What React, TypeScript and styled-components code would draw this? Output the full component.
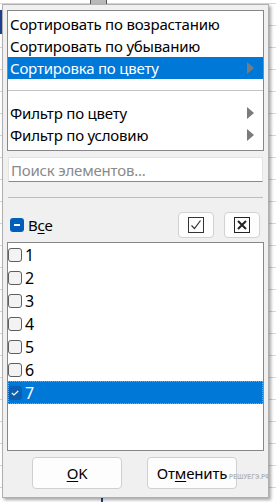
import React from "react";
import styled, { createGlobalStyle } from "styled-components";

const GlobalStyle = createGlobalStyle`
  html, body { margin: 0; padding: 0; background: #fff; overflow: hidden; }
  body { font-family: "Noto Sans", "Open Sans", sans-serif; }
  * { box-sizing: border-box; }
`;

const Sheet = styled.div`
  position: relative;
  width: 276px;
  height: 502px;
  overflow: hidden;
  background-color: #fff;
  background-image: repeating-linear-gradient(
    to bottom,
    transparent 0px,
    transparent 3px,
    #d6d6d6 3px,
    #d6d6d6 4px,
    transparent 4px,
    transparent 22px
  );
  background-size: 100% 22px;
`;

const FilterButton = styled.div`
  position: absolute;
  left: 90px;
  top: -3px;
  width: 17px;
  height: 8px;
  background: #b9b9b9;
  border: 1px solid #555;
`;

const CellCursorV = styled.div<{ $x: number; $y: number; $h: number }>`
  position: absolute;
  left: ${(p) => p.$x}px;
  top: ${(p) => p.$y}px;
  width: 2px;
  height: ${(p) => p.$h}px;
  background: #1f3f8f;
`;

const Popup = styled.div`
  position: absolute;
  left: 2px;
  top: 4px;
  width: 267px;
  height: 494px;
  background: #f0f0f0;
  border: 1px solid #b0b0b0;
  box-shadow: 2px 2px 3px rgba(0, 0, 0, 0.35);
  padding: 5px 4px 0 4px;
  display: flex;
  flex-direction: column;
  font-size: 15px;
  letter-spacing: -0.2px;
  color: #000;
`;

const Menu = styled.div`
  width: 257px;
  height: 141px;
  background: #fff;
  border: 1px solid #86868b;
  padding: 2px 0 0 0;
  display: flex;
  flex-direction: column;
`;

const MenuItem = styled.div<{ $active?: boolean }>`
  height: 22px;
  display: flex;
  align-items: center;
  justify-content: space-between;
  padding: 0 9px 0 2px;
  white-space: nowrap;
  background: ${(p) => (p.$active ? "#0078d7" : "transparent")};
  color: ${(p) => (p.$active ? "#fff" : "#000")};
`;

const MenuSeparator = styled.div`
  height: 23px;
  display: flex;
  align-items: center;
  &::after {
    content: "";
    display: block;
    width: 100%;
    height: 1px;
    background: #c4c4c4;
    margin-top: -1px;
  }
`;

const Arrow = () => (
  <svg width="7" height="12" viewBox="0 0 7 12">
    <path d="M0 0 L7 6 L0 12 Z" fill="#7b7b7b" />
  </svg>
);

const Search = styled.div`
  margin: 6px 0 0 1px;
  width: 255px;
  height: 25px;
  background: #fff;
  border: 1px solid #e3e3e3;
  border-bottom: 1px solid #8a8a8a;
  color: #8a8a8a;
  display: flex;
  align-items: center;
  padding-left: 2px;
  font-size: 15px;
`;

const Divider = styled.div`
  margin: 15px 0 0 1px;
  width: 255px;
  height: 1px;
  background: #bdbdbd;
`;

const AllRow = styled.div`
  margin-top: 14px;
  height: 26px;
  display: flex;
  align-items: center;
  padding-left: 3px;
`;

const TriBox = styled.span`
  width: 14px;
  height: 14px;
  border-radius: 3px;
  background: #005fb8;
  display: inline-flex;
  align-items: center;
  justify-content: center;
  &::after {
    content: "";
    width: 6px;
    height: 1.5px;
    background: #fff;
  }
`;

const AllLabel = styled.span`
  margin-left: 4px;
  flex: 1;
  u { text-decoration-thickness: 1px; text-underline-offset: 2px; }
`;

const IconBtn = styled.button`
  width: 36px;
  height: 26px;
  margin-right: 10px;
  border: 1px solid #d2d2d2;
  border-radius: 4px;
  background: #fdfdfd;
  display: inline-flex;
  align-items: center;
  justify-content: center;
  padding: 0;
  &:last-child { margin-right: 4px; }
`;

const List = styled.div`
  margin-top: 4px;
  width: 257px;
  height: 209px;
  background: #fff;
  border: 1px solid #86868b;
  display: flex;
  flex-direction: column;
`;

const ListRow = styled.div<{ $selected?: boolean }>`
  height: 23px;
  display: flex;
  align-items: center;
  gap: 3px;
  background: ${(p) => (p.$selected ? "#0078d7" : "transparent")};
  color: ${(p) => (p.$selected ? "#fff" : "#000")};
  outline: ${(p) => (p.$selected ? "1px dotted #ff8c1a" : "none")};
  outline-offset: -1px;
  font-size: 16px;
`;

const Check = styled.span<{ $checked?: boolean }>`
  width: 14px;
  height: 14px;
  border-radius: 3px;
  border: 1px solid ${(p) => (p.$checked ? "#0a5fb0" : "#5f5f5f")};
  background: ${(p) => (p.$checked ? "#0a5fb0" : "#f3f3f3")};
  display: inline-flex;
  align-items: center;
  justify-content: center;
`;

const Footer = styled.div`
  margin-top: 6px;
  display: flex;
  gap: 25px;
  padding-left: 25px;
`;

const DlgButton = styled.button`
  width: 90px;
  height: 32px;
  border: 1px solid #d0d0d0;
  border-radius: 4px;
  background: #fdfdfd;
  font-family: "Noto Sans", "Open Sans", sans-serif;
  font-size: 15px;
  letter-spacing: -0.2px;
  color: #000;
  padding: 0;
  u { text-decoration-thickness: 1px; text-underline-offset: 2px; }
`;

const Watermark = styled.div`
  position: absolute;
  left: 229px;
  top: 473px;
  font-family: "Liberation Sans", sans-serif;
  font-size: 7px;
  font-weight: bold;
  letter-spacing: 0.2px;
  color: #b4b4b4;
  white-space: nowrap;
  transform: scaleX(0.85);
  transform-origin: left center;
`;

const CheckAllIcon = () => (
  <svg width="16" height="16" viewBox="0 0 16 16">
    <rect x="0.5" y="0.5" width="15" height="15" fill="none" stroke="#333" strokeWidth="1" />
    <path d="M3.5 8.5 L6.5 11.5 L12.5 3.5" fill="none" stroke="#333" strokeWidth="1.2" />
  </svg>
);

const UncheckAllIcon = () => (
  <svg width="16" height="16" viewBox="0 0 16 16">
    <rect x="0.5" y="0.5" width="15" height="15" fill="none" stroke="#222" strokeWidth="1" />
    <path d="M4 4 L12 12 M12 4 L4 12" fill="none" stroke="#222" strokeWidth="2" />
  </svg>
);

const SmallTick = () => (
  <svg width="8" height="6" viewBox="0 0 8 6">
    <path d="M0.8 3 L3 5 L7.2 1" fill="none" stroke="#fff" strokeWidth="1.2" />
  </svg>
);

const items = ["1", "2", "3", "4", "5", "6", "7"];

export default function App() {
  return (
    <>
      <GlobalStyle />
      <Sheet>
        <FilterButton />
        <CellCursorV $x={0} $y={10} $h={24} />
        <CellCursorV $x={101} $y={496} $h={6} />
        <Popup>
          <Menu>
            <MenuItem>Сортировать по возрастанию</MenuItem>
            <MenuItem>Сортировать по убыванию</MenuItem>
            <MenuItem $active>
              <span>Сортировка по цвету</span>
              <Arrow />
            </MenuItem>
            <MenuSeparator />
            <MenuItem>
              <span>Фильтр по цвету</span>
              <Arrow />
            </MenuItem>
            <MenuItem>
              <span>Фильтр по условию</span>
              <Arrow />
            </MenuItem>
          </Menu>
          <Search>Поиск элементов...</Search>
          <Divider />
          <AllRow>
            <TriBox />
            <AllLabel>
              В<u>с</u>е
            </AllLabel>
            <IconBtn>
              <CheckAllIcon />
            </IconBtn>
            <IconBtn>
              <UncheckAllIcon />
            </IconBtn>
          </AllRow>
          <List>
            {items.map((n) => (
              <ListRow key={n} $selected={n === "7"}>
                <Check $checked={n === "7"}>{n === "7" && <SmallTick />}</Check>
                <span>{n}</span>
              </ListRow>
            ))}
          </List>
          <Footer>
            <DlgButton>
              <u>O</u>K
            </DlgButton>
            <DlgButton>
              От<u>м</u>енить
            </DlgButton>
          </Footer>
        </Popup>
        <Watermark>РЕШУЕГЭ.РФ</Watermark>
      </Sheet>
    </>
  );
}
